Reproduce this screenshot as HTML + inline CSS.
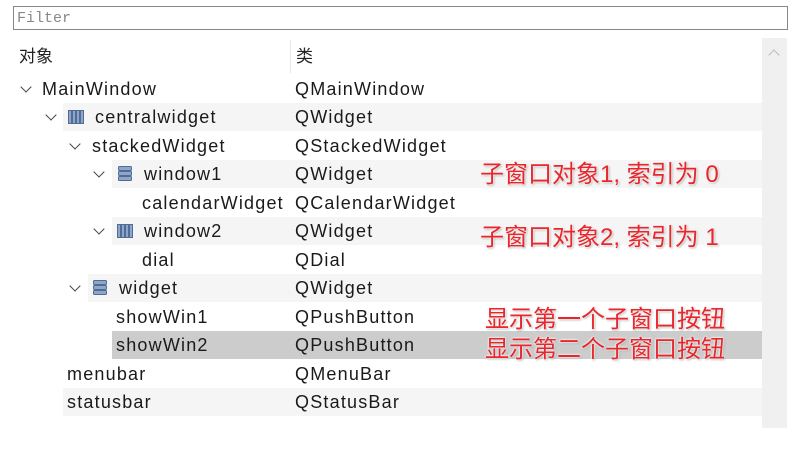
<!DOCTYPE html>
<html><head><meta charset="utf-8"><style>
body{margin:0;width:793px;height:449px;background:#fff;position:relative;overflow:hidden;font-family:"Liberation Sans","Noto Sans CJK SC",sans-serif;}
.filter{position:absolute;left:13px;top:6px;height:24px;border:1px solid #888;background:#fff;font-family:"Liberation Mono",monospace;font-size:15px;color:#888;line-height:24px;padding-left:3px;box-sizing:border-box;width:775px;}
.tree{position:absolute;left:13px;top:38px;width:749px;height:390px;background:#fff;}
.sb{position:absolute;left:762px;top:38px;width:25px;height:390px;background:#f0f0f0;}
.sb:after{content:"";position:absolute;left:8px;top:13px;width:7px;height:7px;border-left:1.5px solid #bbb;border-top:1.5px solid #bbb;transform:rotate(45deg);}
.hd{position:absolute;top:0;height:37px;line-height:37px;font-size:17px;color:#222;}
.hsep{position:absolute;left:277px;top:2px;width:1px;height:33px;background:#e6e6e6;}
.row{position:absolute;height:28px;font-size:18px;letter-spacing:1.2px;line-height:28px;color:#1a1a1a;white-space:nowrap;}
.arr{position:absolute;width:7px;height:7px;border-right:1.6px solid #444;border-bottom:1.6px solid #444;transform:rotate(45deg);}
.ann{position:absolute;color:#e8262b;font-size:24px;font-family:"Liberation Sans","Noto Sans CJK SC",sans-serif;text-shadow:0 0 2px #fff,0 0 2px #fff,1px 1px 2px #999;white-space:nowrap;}
</style></head><body>
<div class="filter">Filter</div>
<div class="tree">
<div class="hd" style="left:6px">对象</div><div class="hsep"></div><div class="hd" style="left:283px">类</div>
</div>
<div class="sb"></div>
<div id="rows"></div>
<script>
var R=[
[0,"MainWindow","QMainWindow",29,1,null],
[1,"centralwidget","QWidget",82,1,"col"],
[2,"stackedWidget","QStackedWidget",79,1,null],
[3,"window1","QWidget",131,1,"stk"],
[4,"calendarWidget","QCalendarWidget",129,0,null],
[5,"window2","QWidget",131,1,"col"],
[6,"dial","QDial",129,0,null],
[7,"widget","QWidget",106,1,"stk"],
[8,"showWin1","QPushButton",103,0,null],
[9,"showWin2","QPushButton",103,0,null],
[10,"menubar","QMenuBar",54,0,null],
[11,"statusbar","QStatusBar",54,0,null]];
var bgStart=[13,63,13,112,13,112,13,88,13,112,13,63];
var arrX=[22,47,71,95,0,95,0,71];
var h="";
R.forEach(function(r,i){
 var top=75+i*28.45;
 var sel=i==9;
 var shade=(i%2==1)||sel;
 var bx=bgStart[i];
 if(shade) h+='<div style="position:absolute;left:'+bx+'px;top:'+top+'px;width:'+(762-bx)+'px;height:28px;background:'+(sel?'#cccccc':'#f5f5f5')+'"></div>';
 if(r[4]) h+='<div class="arr" style="left:'+arrX[i]+'px;top:'+(top+8)+'px"></div>';
 var tx=r[3]+13;
 if(r[5]=="col") h+='<svg style="position:absolute;left:'+(tx-28)+'px;top:'+(top+6)+'px" width="18" height="16"><g fill="#8fa6c8" stroke="#4f6b96" stroke-width="1"><rect x="1.5" y="1.5" width="3" height="13"/><rect x="5.5" y="1.5" width="3" height="13"/><rect x="9.5" y="1.5" width="3" height="13"/><rect x="13.5" y="1.5" width="3" height="13"/></g></svg>';
 if(r[5]=="stk") h+='<svg style="position:absolute;left:'+(tx-27)+'px;top:'+(top+5)+'px" width="16" height="17"><g fill="#8fa6c8" stroke="#4f6b96" stroke-width="1"><rect x="1.5" y="1.5" width="13" height="4" rx="1"/><rect x="1.5" y="6.5" width="13" height="4" rx="1"/><rect x="1.5" y="11.5" width="13" height="4" rx="1"/></g></svg>';
 h+='<div class="row" style="left:'+tx+'px;top:'+top+'px">'+r[1]+'</div>';
 h+='<div class="row" style="left:295px;top:'+top+'px">'+r[2]+'</div>';
});
document.getElementById("rows").innerHTML=h;
</script>
<div class="ann" style="left:480px;top:154px">子窗口对象1, 索引为 0</div>
<div class="ann" style="left:480px;top:217px">子窗口对象2, 索引为 1</div>
<div class="ann" style="left:485px;top:299px">显示第一个子窗口按钮</div>
<div class="ann" style="left:485px;top:329px">显示第二个子窗口按钮</div>
</body></html>
